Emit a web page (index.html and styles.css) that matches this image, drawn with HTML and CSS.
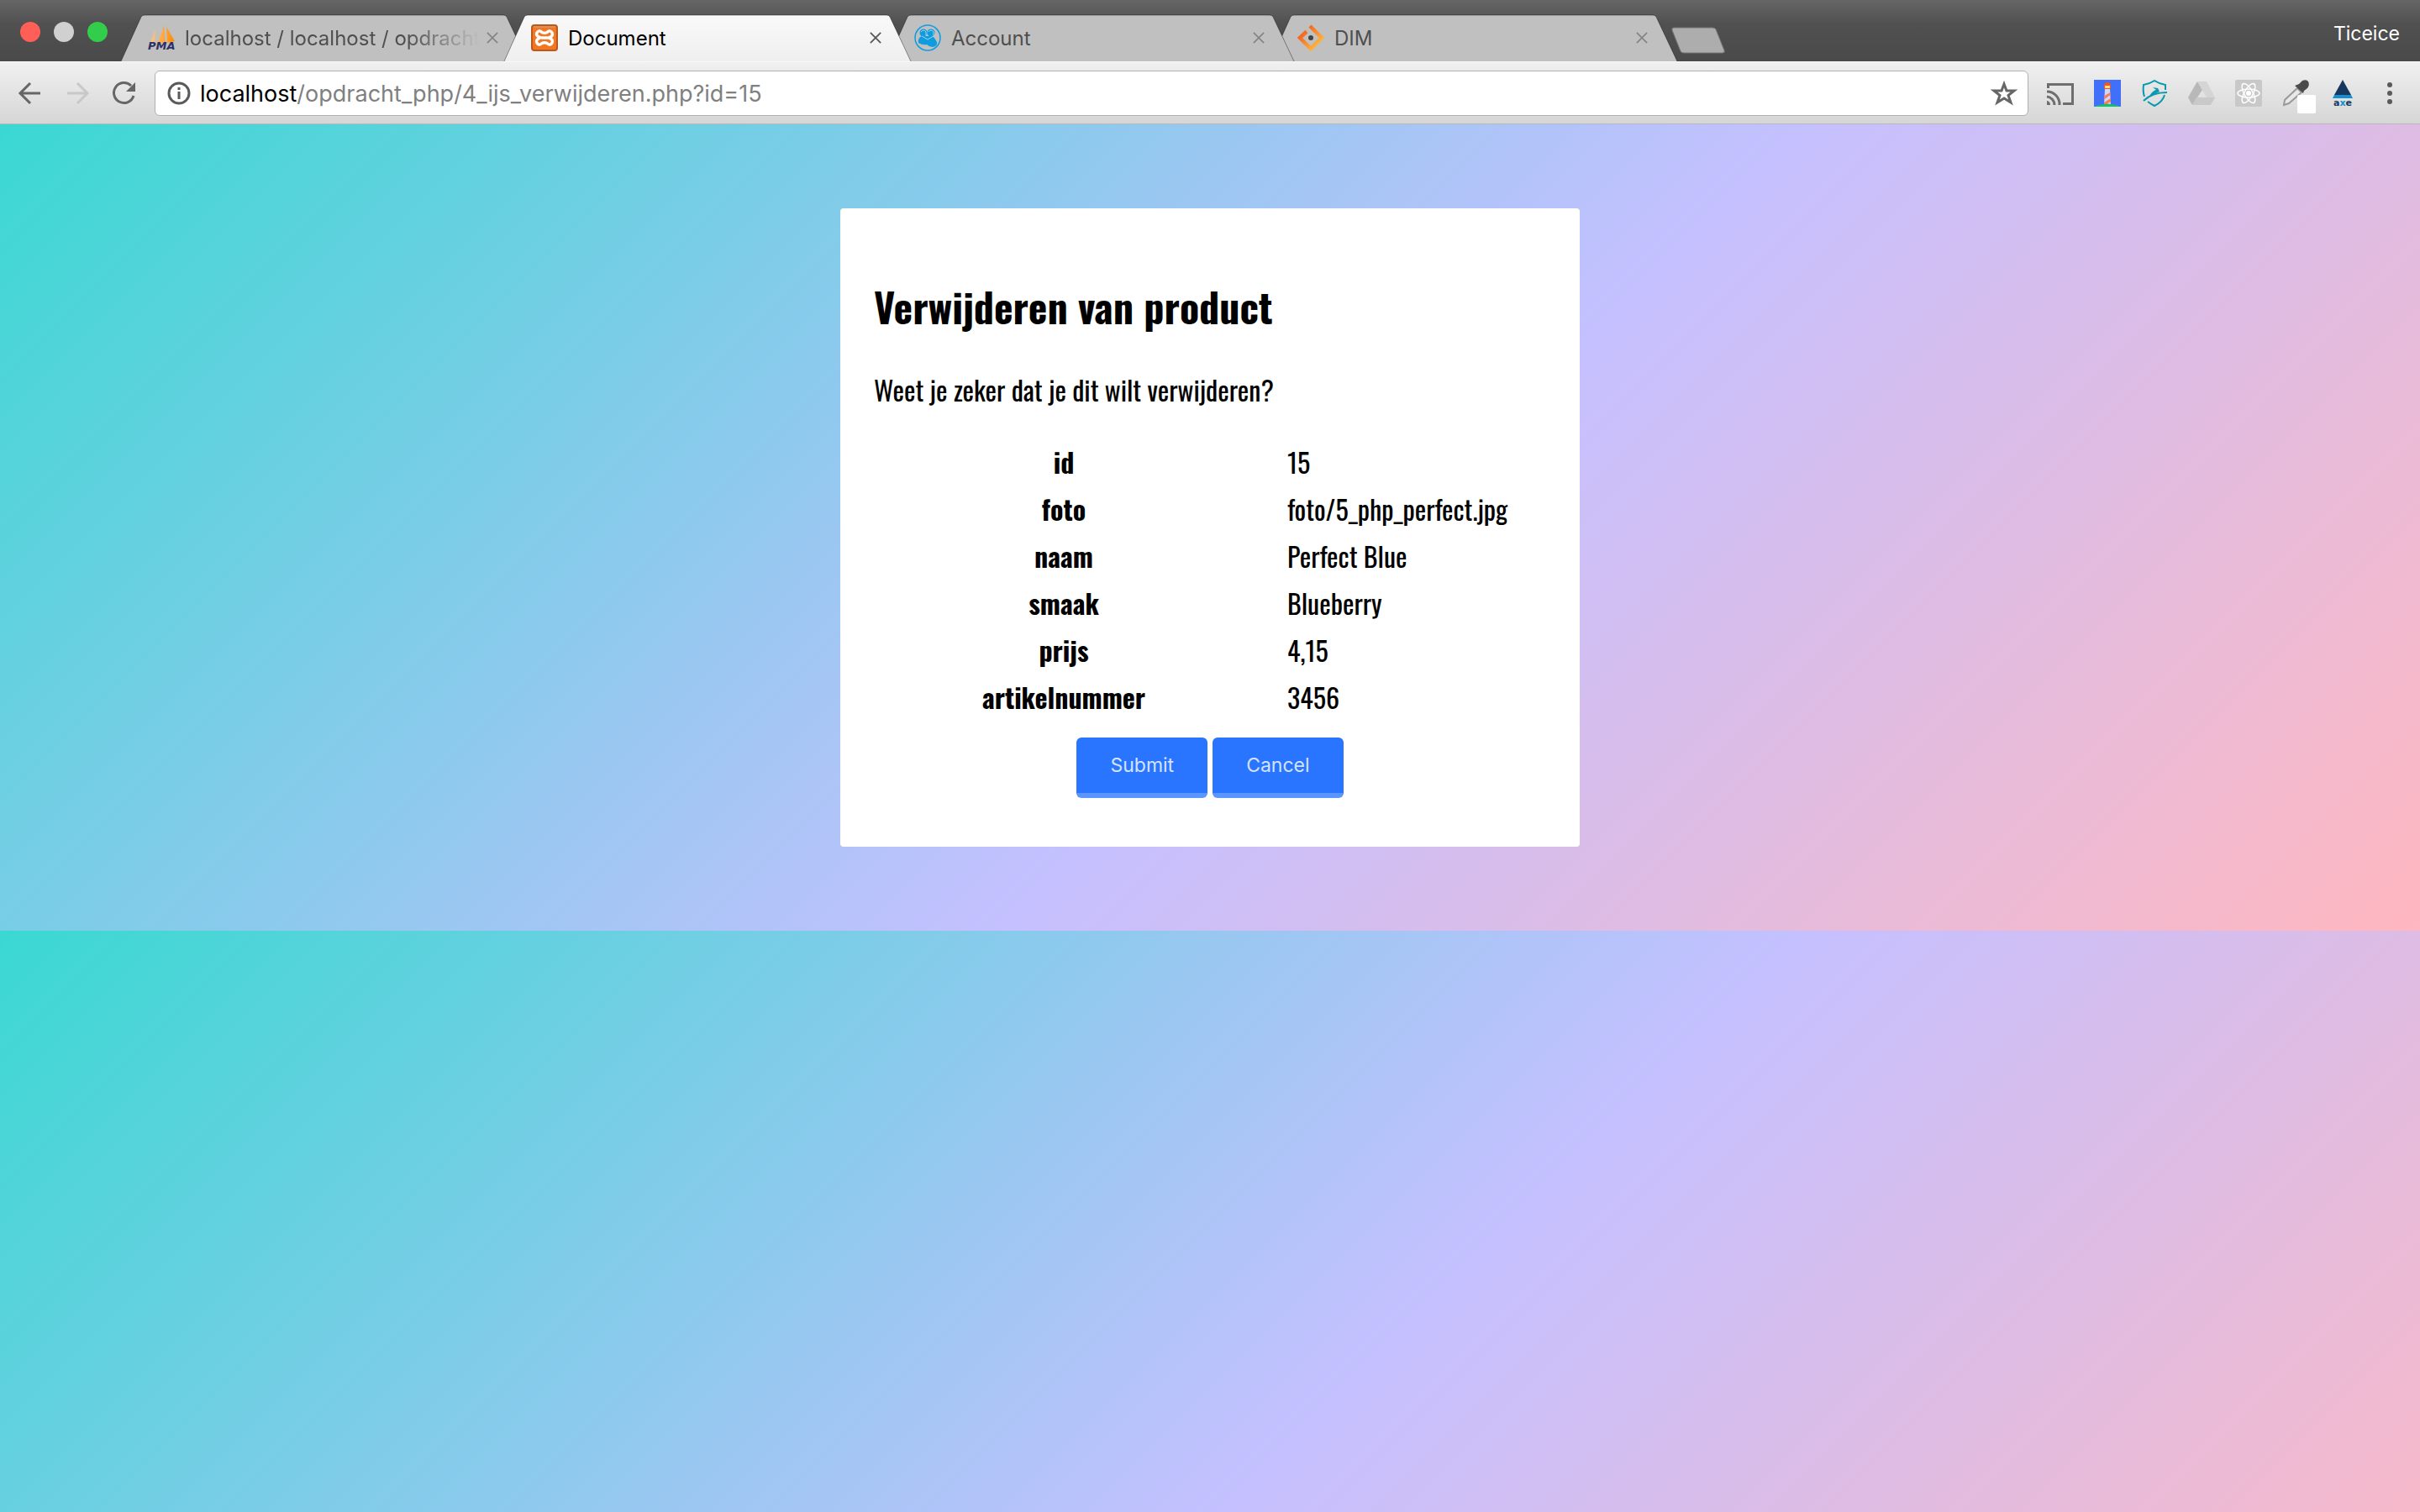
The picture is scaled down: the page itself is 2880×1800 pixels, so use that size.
FILE: index.html
```
<!DOCTYPE html>
<html lang="nl">
<head>
<meta charset="utf-8">
<title>Document</title>
<link rel="stylesheet" href="styles.css">
</head>
<body>
<header class="browser">
  <div class="tabstrip">
    <div class="lights"><span class="light red"></span><span class="light grey"></span><span class="light green"></span></div>
    <nav class="tabs">
      <div class="tab">
        <svg class="shape" viewBox="0 0 484 56" preserveAspectRatio="none"><path d="M0 56L24 3Q25 1 28 1H455Q458 1 459 3L484 56"/></svg>
        <svg class="favicon" viewBox="0 0 32 32"><defs><linearGradient id="sail"><stop offset="0" stop-color="#f9c88c"/><stop offset="1" stop-color="#ff8a00"/></linearGradient></defs><path fill="url(#sail)" d="M3 22L9 5L8 22zM10 22Q17 12 19 0L21 22zM22 3L32 20L23 22z"/><text class="pma" x="0" y="30">PMA</text></svg>
        <a class="tab-title fade" href="#">localhost / localhost / opdracht</a>
        <button class="close" aria-label="Sluiten"><svg viewBox="0 0 16 16"><path d="M1 1L15 15M15 1L1 15"/></svg></button>
      </div>
      <div class="tab active">
        <svg class="shape" viewBox="0 0 484 56" preserveAspectRatio="none"><defs><linearGradient id="tabfill" x2="0" y2="1"><stop offset="0" stop-color="#f9f9f9"/><stop offset="1" stop-color="#efefef"/></linearGradient></defs><path d="M0 56L24 3Q25 1 28 1H455Q458 1 459 3L484 56"/></svg>
        <svg class="favicon" viewBox="0 0 32 32"><rect x="1" y="1" width="30" height="30" rx="3" fill="#f37623" stroke="#b95a1c" stroke-width="2"/><path d="M3 3H29" stroke="#d9905c" stroke-width="2"/><path d="M12 16H20M12 16Q5 14 7 10Q9 6 13 9.500Q16 11 19 9.500Q23 6 25 10Q27 14 21 16Q27 18 25 22Q23 26 19 22.500Q16 21 13 22.500Q9 26 7 22Q5 18 11 16" fill="none" stroke="#fff" stroke-width="3.500"/></svg>
        <a class="tab-title" href="#">Document</a>
        <button class="close" aria-label="Sluiten"><svg viewBox="0 0 16 16"><path d="M1 1L15 15M15 1L1 15"/></svg></button>
      </div>
      <div class="tab third">
        <svg class="shape" viewBox="0 0 484 56" preserveAspectRatio="none"><path d="M0 56L24 3Q25 1 28 1H455Q458 1 459 3L484 56"/></svg>
        <svg class="favicon" viewBox="0 0 32 32"><circle cx="16" cy="16" r="15" fill="none" stroke="#0d9ce0" stroke-width="1.500"/><g fill="#0d9ce0"><circle cx="11" cy="10" r="4.500"/><circle cx="20" cy="10" r="4.500"/><path d="M5 22Q4 16 9 14H22Q25 17 27 21Q28 26 22 27Q18 27 15 24Q10 25 5 22z"/></g><path d="M8 9Q11 5 14 9V14M17 9Q20 5 23 9V14L16 18L9 14" fill="none" stroke="#9fd3ec"/></svg>
        <a class="tab-title" href="#">Account</a>
        <button class="close" aria-label="Sluiten"><svg viewBox="0 0 16 16"><path d="M1 1L15 15M15 1L1 15"/></svg></button>
      </div>
      <div class="tab">
        <svg class="shape" viewBox="0 0 484 56" preserveAspectRatio="none"><path d="M0 56L24 3Q25 1 28 1H455Q458 1 459 3L484 56"/></svg>
        <svg class="favicon" viewBox="0 0 32 32"><defs><linearGradient id="dim" x2="1" y2="1"><stop offset="0.200" stop-color="#f26522"/><stop offset="0.800" stop-color="#fdb13b"/></linearGradient></defs><path d="M11 8.500L3 16L16 29L29 16L15 2" fill="none" stroke="url(#dim)" stroke-width="4.500"/><circle cx="16" cy="16" r="3" fill="#444"/></svg>
        <a class="tab-title" href="#">DIM</a>
        <button class="close" aria-label="Sluiten"><svg viewBox="0 0 16 16"><path d="M1 1L15 15M15 1L1 15"/></svg></button>
      </div>
    </nav>
    <button class="newtab" aria-label="Nieuw tabblad"><svg viewBox="0 0 66 32"><path d="M4 1H50Q53 1 54 3L64 28Q65 31 62 31H16Q13 31 12 29L2 4Q1 1 4 1z"/></svg></button>
    <span class="profile">Ticeice</span>
  </div>
  <div class="toolbar">
    <div class="navs">
      <button class="nav" aria-label="Terug"><svg viewBox="0 0 32 32"><path d="M28 16H4M16 4L4 16L16 28"/></svg></button>
      <button class="nav off" aria-label="Vooruit"><svg viewBox="0 0 32 32"><path d="M4 16H28M16 4L28 16L16 28"/></svg></button>
      <button class="nav" aria-label="Vernieuwen"><svg viewBox="0 0 32 32"><path d="M27 19A12 12 0 1 1 24 7"/><path class="tip" d="M29 3V14H18z"/></svg></button>
    </div>
    <div class="address">
      <svg class="info" viewBox="0 0 28 28"><circle cx="14" cy="14" r="12"/><path d="M14 12V21M14 7V10"/></svg>
      <a class="url" href="#"><span class="host">localhost</span>/opdracht_php/4_ijs_verwijderen.php?id=15</a>
      <button class="star" aria-label="Bladwijzer"><svg viewBox="0 0 32 32"><path d="M16 5L19 13L28 13L21 18.500L24 27L16 22L8 27L11 18.500L4 13L13 13z"/></svg></button>
    </div>
    <div class="extensions">
      <svg viewBox="0 0 32 32"><g fill="none" stroke="#6e6e6e" stroke-width="3"><path d="M1.500 10V5.500H30.500V28.500H19M0 14A15 15 0 0 1 15 30M0 20A10 10 0 0 1 9 30"/></g><path d="M0 25A5 5 0 0 1 4 30H0z" fill="#6e6e6e"/></svg>
      <svg viewBox="0 0 32 32"><path d="M0 0H32V32H0z" fill="#4070fa"/><path d="M13 11H19L20 30H12z" fill="#d4d4f5"/><path d="M12.500 19L19.500 15V18L12.500 23zM12 27L20 22V26L13 30H12z" fill="#ff7a50"/><path d="M12 11V7Q12 3 16 3Q20 3 20 7V11z" fill="#f4522d"/><path d="M13 7H19V10H13z" fill="#ffe27a"/><path d="M0 32Q16 25 32 32z" fill="#0fc36b"/></svg>
      <svg viewBox="0 0 32 32"><g fill="none" stroke="#0799b0" stroke-width="2"><path d="M4 20Q2 14 3 6Q10 5 16 1Q22 5 29 6V12M28 18Q26 26 16 31Q12 29 8 26"/><path d="M3 25Q13 15 31 15"/></g><path d="M10 19Q14 13 18 12L14 9L20 10L22 14L16 17z" fill="#0799b0"/></svg>
      <svg viewBox="0 0 32 32"><path d="M11 2L0 21L5 30L17 12z" fill="#b8b8b8"/><path d="M11 2H22L32 21H22z" fill="#d5d5d5"/><path d="M10 21H32L27 30H5z" fill="#c9c9c9"/></svg>
      <svg viewBox="0 0 32 32"><rect width="32" height="32" rx="2" fill="#c8c8c8"/><g fill="none" stroke="#fff" stroke-width="1.500"><ellipse cx="16" cy="16" rx="13" ry="5"/><ellipse cx="16" cy="16" rx="13" ry="5" transform="rotate(60 16 16)"/><ellipse cx="16" cy="16" rx="13" ry="5" transform="rotate(120 16 16)"/></g><circle cx="16" cy="16" r="3" fill="#fff"/></svg>
      <svg viewBox="0 0 32 32"><path d="M18 10L23 15L8 28L2 30L3 24z" fill="#e8e8e8" stroke="#999" stroke-width="2"/><path d="M15 7L20 5L24 1Q29 -1 31 2Q33 6 30 10L26 13L25 16z" fill="#4b4b4b"/><rect x="18" y="18" width="22" height="22" rx="2" fill="#fff"/></svg>
      <svg viewBox="0 0 32 32"><path d="M16 0L26 18H6z" fill="#17375e"/><path d="M6 18H26L28 22H4z" fill="#1290d0"/><text class="axe" x="5" y="31">a<tspan fill="#1290d0">x</tspan>e</text></svg>
      <button class="menu" aria-label="Menu"><svg viewBox="0 0 8 28"><circle cx="4" cy="4" r="3"/><circle cx="4" cy="14" r="3"/><circle cx="4" cy="24" r="3"/></svg></button>
    </div>
  </div>
</header>
<main class="page">
  <section class="card">
    <h1>Verwijderen van product</h1>
    <p>Weet je zeker dat je dit wilt verwijderen?</p>
    <form>
      <table>
        <tbody>
          <tr><th scope="row">id</th><td>15</td></tr>
          <tr><th scope="row">foto</th><td>foto/5_php_perfect.jpg</td></tr>
          <tr><th scope="row">naam</th><td>Perfect Blue</td></tr>
          <tr><th scope="row">smaak</th><td>Blueberry</td></tr>
          <tr><th scope="row">prijs</th><td>4,15</td></tr>
          <tr><th scope="row">artikelnummer</th><td>3456</td></tr>
        </tbody>
      </table>
      <div class="actions"><button class="btn" type="submit">Submit</button><button class="btn" type="button">Cancel</button></div>
    </form>
  </section>
</main>
</body>
</html>
```
FILE: styles.css
```
* { box-sizing: border-box; }
body { margin: 0; min-height: 100vh; display: flex; flex-direction: column; font-family: Inter, "Liberation Sans", sans-serif; }
button { border: 0; padding: 0; background: none; font-family: inherit; }
a { color: inherit; text-decoration: none; }
svg { display: block; overflow: visible; }

.tabstrip { display: flex; align-items: flex-end; height: 73px; padding-right: 24px; background: linear-gradient(#666, #505050 40%, #4a4a4a); }
.lights { display: flex; gap: 16px; padding: 0 16px 23px 24px; }
.light { width: 24px; height: 24px; border-radius: 50%; }
.red { background: #ff5f57; }
.grey { background: #d0d0d0; }
.green { background: #32cd4b; }
.tabs { display: flex; }
.tab { position: relative; isolation: isolate; display: flex; align-items: center; width: 484px; height: 56px; margin-right: -28px; padding: 0 27px 0 32px; color: #4f4f4f; }
.tab.third { z-index: 1; }
.tab.active { z-index: 2; color: #000; }
.shape { position: absolute; inset: 0; width: 100%; height: 100%; z-index: -1; }
.shape path { fill: #c0c0c0; stroke: rgba(0, 0, 0, 0.4); stroke-width: 1; }
.active .shape path { fill: url(#tabfill); }
.favicon { flex: none; width: 32px; height: 32px; }
.pma { font: italic bold 13px "DejaVu Sans", sans-serif; fill: #2d2f66; }
.tab-title { flex: 1; margin-left: 12px; padding-top: 2px; overflow: hidden; white-space: nowrap; font-size: 24px; line-height: 32px; }
.fade { -webkit-mask-image: linear-gradient(90deg, #000 75%, transparent); mask-image: linear-gradient(90deg, #000 75%, transparent); }
.close { margin: 0 8px; }
.close svg { width: 14px; height: 14px; fill: none; stroke: #858585; stroke-width: 2; }
.active .close svg { stroke: #555; }
.newtab { margin: 0 0 9px 20px; }
.newtab svg { width: 66px; height: 32px; fill: #adadad; stroke: #777; stroke-width: 1; }
.profile { margin-left: auto; padding-bottom: 17px; color: #fff; font-size: 23px; line-height: 32px; }

.toolbar { display: flex; align-items: center; height: 75px; padding: 0 32px 0 20px; border-top: 1px solid #f8f8f8; border-bottom: 1px solid #b8b8b8; background: linear-gradient(#f0f0f0, #d6d6d6); }
.navs { display: flex; gap: 24px; margin-right: 20px; }
.nav svg { width: 32px; height: 32px; fill: none; stroke: #666; stroke-width: 3; }
.nav.off svg { stroke: #c8c8c8; }
.nav .tip { fill: #666; stroke: none; }
.address { flex: 1; display: flex; align-items: center; height: 54px; padding: 0 12px 0 14px; border: 1px solid #b0b0b0; border-radius: 6px; background: #fff; }
.info { width: 28px; height: 28px; fill: none; stroke: #5a5a5a; stroke-width: 3; }
.url { flex: 1; margin-left: 11px; padding-top: 2px; color: #808080; font-size: 27px; line-height: 36px; }
.host { color: #000; }
.star svg { width: 32px; height: 32px; fill: none; stroke: #666; stroke-width: 3; }
.extensions { display: flex; align-items: center; gap: 24px; margin-left: 22px; }
.extensions > svg { width: 32px; height: 32px; }
.axe { font: bold 11px "DejaVu Sans", sans-serif; fill: #17375e; }
.menu { margin-left: 12px; }
.menu svg { width: 8px; height: 28px; fill: #5a5a5a; }

.page { flex: 1; padding: 100px 40px; background: linear-gradient(135deg, #3ad8d2, #c5c0ff 56%, #ffb7c0) 0 0 / 100% 960px; }
.card { width: 880px; max-width: 100%; margin: 0 auto; padding: 78px 40px 58px; border-radius: 4px; background: #fff; color: #000; font-family: Oswald, "Liberation Sans Narrow", "Open Sans Condensed", "Arial Narrow", sans-serif; font-size: 32px; line-height: 50px; }
h1 { margin: 0; font-size: 48px; line-height: 78px; }
p { margin: 35px 0 31px; }
table { width: 100%; border-spacing: 2px 4px; table-layout: fixed; }
th, td { padding: 1px; line-height: 50px; }
th { width: 448px; text-align: center; }
td { padding-left: 40px; }
.actions { display: flex; justify-content: center; gap: 6px; margin-top: 18px; }
.btn { height: 72px; padding: 0 40px; border-bottom: 6px solid #5b95ff; border-radius: 6px; background: #2a75ff; color: #d4e3ff; font-family: Inter, "Liberation Sans", sans-serif; font-size: 23px; }
```
